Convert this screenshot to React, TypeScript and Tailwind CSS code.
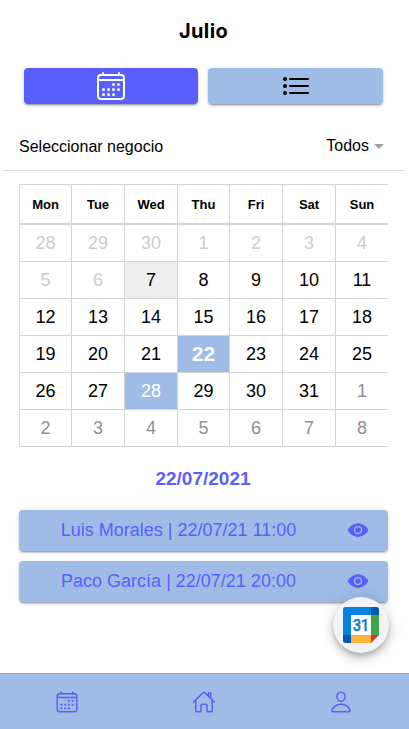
import React from "react";
import { IoCalendarOutline, IoListOutline, IoEye, IoHomeOutline, IoPersonOutline } from "react-icons/io5";

const weekdays = ["Mon", "Tue", "Wed", "Thu", "Fri", "Sat", "Sun"];

const weeks: number[][] = [
  [28, 29, 30, 1, 2, 3, 4],
  [5, 6, 7, 8, 9, 10, 11],
  [12, 13, 14, 15, 16, 17, 18],
  [19, 20, 21, 22, 23, 24, 25],
  [26, 27, 28, 29, 30, 31, 1],
  [2, 3, 4, 5, 6, 7, 8],
];

const appointments = ["Luis Morales | 22/07/21 11:00", "Paco García | 22/07/21 20:00"];

function dayStyle(week: number, day: number): string {
  if (week === 3 && day === 3) return "bg-[#9ebce6] text-white font-bold text-[21px]";
  if (week === 4 && day === 2) return "bg-[#9ebce6] text-white text-[18px]";
  if (week === 1 && day === 2) return "bg-[#eeeeee] text-black text-[18px]";
  if (week === 0 || (week === 1 && day < 2)) return "text-[#cccccc] text-[18px]";
  if (week === 5 || (week === 4 && day === 6)) return "text-[#8f8f8f] text-[18px]";
  return "text-black text-[18px]";
}

const raised = "rounded-[4px] shadow-[0_3px_1px_-2px_rgba(0,0,0,0.2),0_2px_2px_0_rgba(0,0,0,0.14),0_1px_5px_0_rgba(0,0,0,0.12)]";

function GoogleCalendarLogo() {
  return (
    <svg width="36" height="36" viewBox="0 0 36 36" aria-label="Google Calendar">
      <rect x="8" y="8" width="20" height="20" fill="#fff" />
      <path d="M2.5 0H28v8H8v20H0V2.5A2.5 2.5 0 0 1 2.5 0Z" fill="#0482e0" />
      <path d="M28 0h5.500A2.500 2.500 0 0 1 36 2.500V8h-8Z" fill="#0259b5" />
      <path d="M0 28h8v8H2.500A2.500 2.500 0 0 1 0 33.500Z" fill="#0259b5" />
      <path d="M28 8h8v20h-8Z" fill="#3fa64b" />
      <path d="M8 28h20v8H8Z" fill="#ffb53c" />
      <path d="M28 28h8l-8 8Z" fill="#ea2f38" />
      <text x="18" y="23.700" textAnchor="middle" fontFamily="Roboto, sans-serif" fontSize="16" textLength="16" lengthAdjust="spacingAndGlyphs" fontWeight="500" fill="#147dd6" stroke="#147dd6" strokeWidth="0.500">31</text>
    </svg>
  );
}

export default function App() {
  return (
    <div className="relative flex h-[729px] w-[409px] flex-col overflow-hidden bg-white font-['Liberation_Sans',Arial,sans-serif] text-black">
      <h1 className="pt-[18px] pr-[2px] text-center font-[Inter,sans-serif] text-[20px] leading-[26px] font-bold tracking-[0.400px]">Julio</h1>

      <div className="mt-6 flex gap-[10px] pr-[26px] pl-6">
        <button className={`flex h-9 w-[174px] items-center justify-center bg-[#595ffb] text-white ${raised}`}>
          <IoCalendarOutline size={32} />
        </button>
        <button className={`flex h-9 flex-1 items-center justify-center bg-[#9ebce6] text-black ${raised}`}>
          <IoListOutline size={32} />
        </button>
      </div>

      <div className="mt-[18px] mr-[5px] ml-[3px] flex h-[49px] items-center justify-between border-b border-[#d9d9d9] pr-5 pl-4 text-[16px]">
        <span className="pt-[2px]">Seleccionar negocio</span>
        <span className="flex items-center gap-[5px]">
          Todos
          <span className="h-0 w-0 border-x-[5px] border-t-[5px] border-x-transparent border-t-[#a0a0a0]" />
        </span>
      </div>

      <div className="mt-[13px] mr-[21px] ml-[19px] border-t border-[#d4d4d4]">
        <div className="grid grid-cols-[52px_53px_53px_52px_53px_53px_53px] border-b-2 border-[#d4d4d4]">
          {weekdays.map((d) => (
            <div key={d} className="flex h-[38px] items-center justify-center border-l border-[#d4d4d4] pt-px text-[13px] font-bold">
              {d}
            </div>
          ))}
        </div>
        {weeks.map((week, w) => (
          <div key={w} className="grid grid-cols-[52px_53px_53px_52px_53px_53px_53px] border-b border-[#d4d4d4]">
            {week.map((n, d) => (
              <div key={d} className={`flex h-9 items-center justify-center border-l border-[#d4d4d4] ${dayStyle(w, d)}`}>
                {n}
              </div>
            ))}
          </div>
        ))}
      </div>

      <h2 className="mt-[19px] h-[26px] pr-[3px] text-center text-[19px] leading-[26px] font-bold text-[#595ffb]">22/07/2021</h2>

      <div className="mt-[18px] mr-[21px] ml-[19px] flex flex-col gap-[10px]">
        {appointments.map((a) => (
          <div key={a} className={`flex h-[41px] items-center bg-[#9ebce6] pr-[19px] pb-px text-[#595ffb] ${raised}`}>
            <span className="flex-1 pr-[9px] text-center text-[18px] leading-5">{a}</span>
            <IoEye size={22} />
          </div>
        ))}
      </div>

      <button className="absolute top-[597px] left-[333px] flex size-14 items-center justify-center rounded-full bg-[#f2f3f8] shadow-[0_3px_5px_-1px_rgba(0,0,0,0.2),0_6px_10px_0_rgba(0,0,0,0.14),0_1px_18px_0_rgba(0,0,0,0.12)]">
        <GoogleCalendarLogo />
      </button>

      <nav className="mt-auto grid h-14 grid-cols-[134px_140px_134px] items-center justify-items-center border-t border-[#8fabd1] bg-[#9ebce6] pt-px text-[#595ffb]">
        <IoCalendarOutline size={24} />
        <IoHomeOutline size={24} />
        <IoPersonOutline size={24} />
      </nav>
    </div>
  );
}
